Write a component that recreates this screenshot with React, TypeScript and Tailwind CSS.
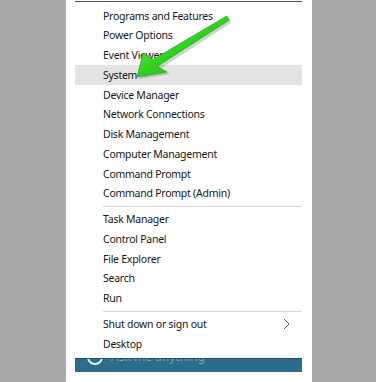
const groups: string[][] = [
  [
    "Programs and Features",
    "Power Options",
    "Event Viewer",
    "System",
    "Device Manager",
    "Network Connections",
    "Disk Management",
    "Computer Management",
    "Command Prompt",
    "Command Prompt (Admin)",
  ],
  ["Task Manager", "Control Panel", "File Explorer", "Search", "Run"],
  ["Shut down or sign out", "Desktop"],
];

const Row = ({ label }: { label: string }) => {
  const active = label === "System";
  return (
    <div
      className={`h-[19.75px] flex items-center justify-between pl-[28px] pr-[12px] ${
        active ? "bg-[#e3e3e3]" : ""
      }`}
    >
      <span className="text-[10.5px] tracking-[-0.25px] text-[#161616] leading-none">{label}</span>
      {label === "Shut down or sign out" && (
        <svg width="7" height="12" viewBox="0 0 7 12">
          <path d="M1 1 L6 6 L1 11" fill="none" stroke="#555" strokeWidth="1" />
        </svg>
      )}
    </div>
  );
};

const Arrow = () => (
  <svg className="absolute left-0 top-0 pointer-events-none" width="376" height="382">
    <defs>
      <linearGradient id="g" x1="0" y1="0" x2="1" y2="1">
        <stop offset="0" stopColor="#7cf25a" />
        <stop offset="0.5" stopColor="#2fd11f" />
        <stop offset="1" stopColor="#1aa812" />
      </linearGradient>
    </defs>
    <polygon
      points="139,79 145,55 154,61 228,17 231,23 160,69 170,74"
      fill="#000"
      opacity="0.18"
    />
    <polygon
      points="137,77 143,53 152.9,59.6 226.7,15.9 229.3,20.1 157.1,66.4 167,72"
      fill="url(#g)"
      stroke="#19a10f"
      strokeWidth="0.6"
    />
  </svg>
);

export default function App() {
  return (
    <div
      className="relative w-full h-[382px] bg-[#a9a9a9] flex overflow-hidden"
      style={{ fontFamily: '"Noto Sans", "Open Sans", sans-serif' }}
    >
      <div className="ml-[66px] w-[246px] h-full bg-white pl-[9px] pr-[10px] flex flex-col">
        <div className="h-[1px] bg-[#4c4e5c] mt-[1px]" />
        <div className="pt-[4px]">
          {groups.map((g, i) => (
            <div key={i}>
              {i > 0 && (
                <div className="h-[6px] pl-[28px] flex items-center">
                  <div className="h-[1px] w-full bg-[#d6d6d6]" />
                </div>
              )}
              {g.map((l) => (
                <Row key={l} label={l} />
              ))}
            </div>
          ))}
        </div>
        <div className="mt-[4px] h-[14px] bg-[#2d6d8c] border-t border-[#1f4f68] relative overflow-hidden">
          <div className="absolute left-[12px] top-[-10px] w-[16px] h-[16px] rounded-full border-2 border-[#e8eef2]" />
          <span className="absolute left-[36px] top-[-10px] text-[12px] leading-[16px] text-[#7fa3b8]">
            Ask me anything
          </span>
        </div>
      </div>
      <Arrow />
    </div>
  );
}
